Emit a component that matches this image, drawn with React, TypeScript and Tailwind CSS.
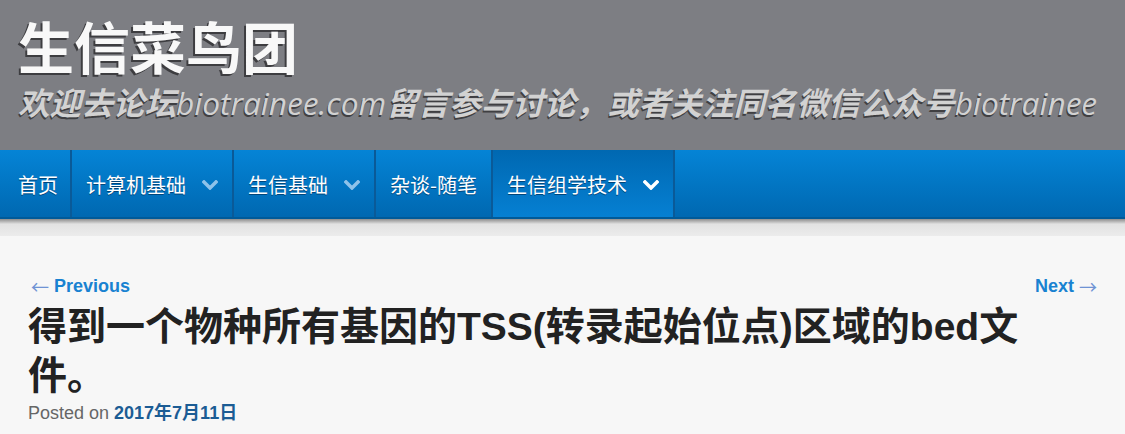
import React from "react";

const Chevron = ({ active }: { active?: boolean }) => (
    <svg width="16" height="10" viewBox="0 0 16 10" className="ml-[16px]">
        <polyline
            points="2,2 8,8 14,2"
            fill="none"
            stroke={active ? "#ffffff" : "#8ec2ea"}
            strokeWidth="3.5"
            strokeLinecap="square"
        />
    </svg>
);

const navItems = [
    { label: "首页", sub: false, first: true },
    { label: "计算机基础", sub: true },
    { label: "生信基础", sub: true },
    { label: "杂谈-随笔", sub: false },
    { label: "生信组学技术", sub: true, active: true },
];

const App = () => {
    return (
        <div className="w-[1125px] h-[434px] overflow-hidden bg-[#f7f7f7] font-['Liberation_Sans','Noto_Sans_CJK_SC',sans-serif]">
            {/* header */}
            <div className="h-[150px] bg-[#7d7e83] pl-[18px] pt-[17px]">
                <h1 className="h-[56px] text-[56px] leading-none font-bold text-[#f8f8f8] font-['Noto_Sans_CJK_SC',sans-serif] [text-shadow:-2px_2px_0_#3d3d40]">
                    生信菜鸟团
                </h1>
                <p className="mt-[14px] h-[32px] text-[31.6px] leading-[32px] italic text-[#d2d2d2] font-['Open_Sans','Noto_Sans_CJK_SC',sans-serif] [text-shadow:-1px_2px_0_#3f3f42] whitespace-nowrap">
                    <span className="font-bold">欢迎去论坛</span>biotrainee.com<span className="font-bold">留言参与讨论，或者关注同名微信公众号</span>biotrainee
                </p>
            </div>

            {/* nav */}
            <div className="h-[69px] flex bg-gradient-to-b from-[#0584d6] to-[#0068b1] border-b-2 border-[#005a99]">
                {navItems.map((item, i) => (
                    <div
                        key={i}
                        className={
                            "h-full flex items-center pt-[3px] border-r-2 border-[#0a5a98] text-[20px] text-white font-['Noto_Sans_CJK_SC',sans-serif] [text-shadow:0_1px_0_#00457a] " +
                            (item.first ? "pl-[18px] pr-[12px] " : "pl-[14px] pr-[14px] ") +
                            (item.active ? "bg-gradient-to-b from-[#0068b1] to-[#0680d3]" : "")
                        }
                    >
                        <span>{item.label}</span>
                        {item.sub && <Chevron active={item.active} />}
                    </div>
                ))}
            </div>

            {/* shadow band */}
            <div className="h-[17px] bg-gradient-to-b from-[#8e8e8e] via-[#e2e2e2] via-30% to-[#ececec]" />

            {/* content */}
            <div className="px-[28px]">
                <div className="mt-[37px] flex justify-between text-[18px] leading-[27px] font-bold text-[#1982d1]">
                    <a className="flex items-center">
                        <span className="font-normal text-[#6f93d4] mr-[5px] ml-[3px] font-['Noto_Sans_CJK_SC',sans-serif]">←</span>Previous
                    </a>
                    <a className="flex items-center">
                        Next<span className="font-normal text-[#6f93d4] ml-[5px] font-['Noto_Sans_CJK_SC',sans-serif]">→</span>
                    </a>
                </div>
                <h2 className="mt-[2px] max-w-[1030px] text-[39px] leading-[49px] font-bold text-[#222222]">
                    得到一个物种所有基因的TSS(转录起始位点)区域的bed文件。
                </h2>
                <div className="text-[18px] leading-[27px] text-[#666666]">
                    Posted on <span className="font-bold text-[#1b5c94]">2017年7月11日</span>
                </div>
            </div>
        </div>
    );
};

export default App;
